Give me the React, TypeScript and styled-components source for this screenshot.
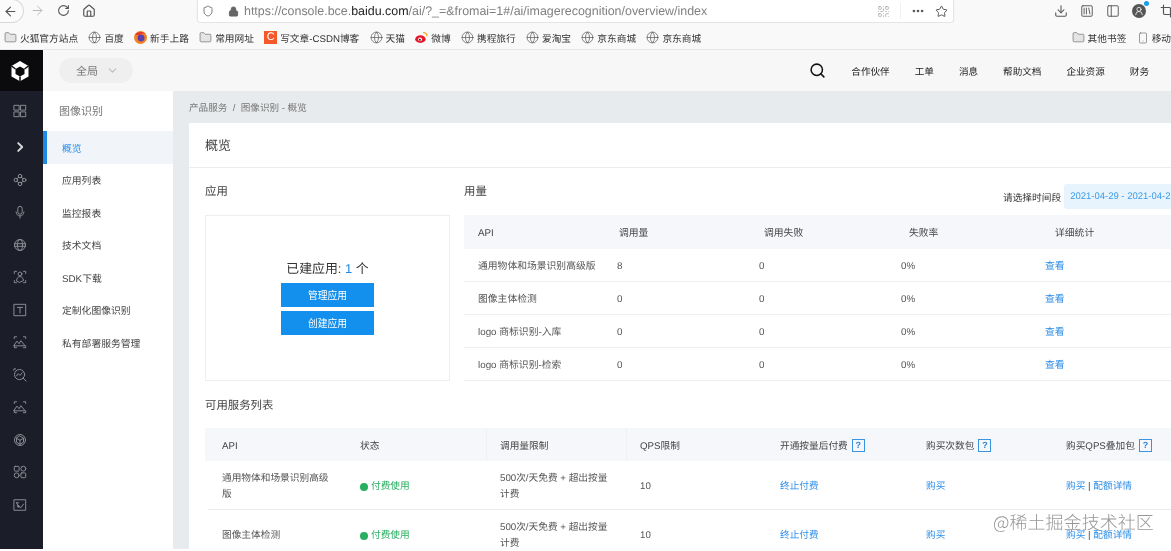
import React from "react";
import styled, { createGlobalStyle } from "styled-components";
import { ArrowLeft, ArrowRight, RotateCw, Home, Shield, Lock, Star, Download, Search, Globe, Folder, ChevronDown, MoreHorizontal, QrCode, PanelLeft, Crop, Smartphone, UserRound, SquareLibrary } from "lucide-react";

const Global = createGlobalStyle`
  html, body { margin: 0; padding: 0; background: #fff; overflow: hidden; }
  * { box-sizing: border-box; }
  body { font-family: "Liberation Sans", "Noto Sans CJK SC", sans-serif; text-rendering: geometricPrecision; }
`;

const Page = styled.div`
  width: 1171px; height: 551px; display: flex; flex-direction: column; overflow: hidden; position: relative; background: #fff; filter: blur(.3px);
`;
const Toolbar = styled.div`
  height: 23px; flex: none; background: #f9f9f9; display: flex; align-items: flex-start; color: #555;
`;
const BackCircle = styled.div`
  width: 24px; height: 24px; flex: none; margin-top: -1px; border-radius: 0 12px 12px 0; border: 1px solid #d8d8d8; border-left: 0; background: #fbfbfb;
  display: flex; align-items: center; justify-content: center; color: #555; padding-right: 2px;
`;
const NavIcons = styled.div`
  width: 174px; flex: none; display: flex; align-items: center; height: 21px; padding-left: 6px; gap: 12px; color: #555;
`;
const UrlBar = styled.div`
  width: 755px; height: 22px; flex: none; background: #fff; box-shadow: 0 0 2px rgba(0,0,0,.3); border-radius: 0 0 2px 2px;
  display: flex; align-items: center; padding: 0 5px 0 0; color: #666;
`;
const ShieldSlot = styled.span`
  width: 20px; display: flex; justify-content: center; margin-right: 10px; height: 16px; align-items: center;
`;
const Url = styled.span`
  font-size: 12.45px; color: #808080; margin-left: 5px; flex: 1; white-space: nowrap;
  b { font-weight: 400; color: #222; }
`;
const UrlActions = styled.div`
  display: flex; align-items: center; gap: 10px; color: #555;
`;
const UrlDivider = styled.span`
  width: 1px; height: 16px; background: #f0f0f0;
`;
const RightTools = styled.div`
  flex: 1; display: flex; justify-content: flex-end; align-items: center; height: 21px; gap: 12px; margin-right: -3px; color: #555;
`;
const Account = styled.span`
  position: relative; display: flex; width: 14px; height: 14px; border-radius: 50%; background: #555; color: #f3f3f3; align-items: center; justify-content: center; margin-right: 2px;
  &::after { content: ""; position: absolute; right: -3px; top: -3px; width: 5px; height: 5px; border-radius: 50%; background: #1c9cf0; }
`;
const Bookmarks = styled.div`
  height: 27px; flex: none; background: #f9f9f9; border-bottom: 1px solid #e6e6e6; display: flex; align-items: center; padding: 3px 0 0 4px; justify-content: space-between;
`;
const BookmarkGroup = styled.div`
  display: flex; align-items: center; gap: 10.3px;
`;
const Bookmark = styled.span`
  display: flex; align-items: center; gap: 3px; font-size: 9.7px; color: #333; white-space: nowrap;
  svg { flex: none; }
`;
const CIcon = styled.span`
  width: 13px; height: 13px; background: #f4592b; color: #fff; font-size: 11px; line-height: 13px; text-align: center; display: block;
`;
const Console = styled.div`
  height: 499px; flex: none; display: flex; overflow: hidden;
`;
const Rail = styled.div`
  width: 43px; flex: none; background: #1b1d28; display: flex; flex-direction: column; color: #8d9097;
`;
const LogoCell = styled.div`
  height: 41px; background: #0b0b0d; display: flex; align-items: center; justify-content: center; padding-right: 3px;
`;
const RailTop = styled.div`
  height: 40px; display: flex; align-items: center; justify-content: center; padding-right: 3px;
`;
const RailItem = styled.div`
  height: 32.5px; display: flex; align-items: center; justify-content: center; padding-right: 3px;
`;
const Column = styled.div`
  flex: 1; min-width: 0; display: flex; flex-direction: column;
`;
const TopBar = styled.div`
  height: 41px; flex: none; background: #f7f7f7; display: flex; align-items: center; padding: 0 22px 0 16px; justify-content: space-between;
`;
const Scope = styled.div`
  width: 74px; height: 25px; border-radius: 13px; background: #efefef; color: #777; font-size: 11px; display: flex; align-items: center; gap: 8px; padding-left: 17px;
  svg { color: #bbb; }
`;
const TopLinks = styled.div`
  display: flex; align-items: center; gap: 25px; color: #222; font-size: 9.6px;
`;
const Body = styled.div`
  flex: 1; min-height: 0; display: flex;
`;
const Side = styled.div`
  width: 130px; flex: none; background: #fff; display: flex; flex-direction: column;
`;
const SideTitle = styled.div`
  height: 40px; display: flex; align-items: center; padding-left: 16px; font-size: 11px; color: #777;
`;
const SideItem = styled.div<{ $active?: boolean }>`
  height: 32.5px; display: flex; align-items: center; font-size: 9.8px; line-height: 14px; white-space: nowrap;
  padding-left: ${(p) => (p.$active ? "15px" : "19px")};
  padding-top: 5px;
  color: ${(p) => (p.$active ? "#2f8fe8" : "#444")};
  background: ${(p) => (p.$active ? "#f1f5fa" : "#fff")};
  border-left: ${(p) => (p.$active ? "4px solid #1e8ae6" : "0")};
`;
const Main = styled.div`
  flex: 1; min-width: 0; background: #e8ebed; padding-left: 16px; overflow: hidden;
`;
const Crumb = styled.div`
  height: 32px; display: flex; align-items: center; font-size: 9.6px; color: #777; white-space: pre;
`;
const Card = styled.div`
  background: #fff; width: 1000px; height: 500px;
`;
const CardTitle = styled.div`
  height: 45px; border-bottom: 1px solid #ececec; display: flex; align-items: center; padding: 0 0 1px 16px; font-size: 13px; color: #444;
`;
const Content = styled.div`
  padding-left: 16px;
`;
const TopRow = styled.div`
  display: flex; gap: 14px; height: 213px;
`;
const AppPane = styled.div`
  width: 245px; flex: none;
`;
const SectionHead = styled.div`
  height: 47px; display: flex; align-items: center; justify-content: space-between; font-size: 11.4px; color: #444; padding-bottom: 1px;
`;
const AppBox = styled.div`
  height: 166px; border: 1px solid #eeeeee; display: flex; flex-direction: column; align-items: center; padding-top: 41px;
`;
const AppCount = styled.div`
  font-size: 12.9px; line-height: 23px; color: #333; margin-bottom: 3px;
  em { font-style: normal; color: #1e8ae6; }
`;
const PrimaryButton = styled.button`
  width: 93px; height: 24px; border: 0; background: #1390ee; color: #fff; font: 9.8px "Liberation Sans", "Noto Sans CJK SC", sans-serif; padding: 0; margin-bottom: 4px;
`;
const UsagePane = styled.div`
  width: 730px; flex: none;
`;
const UsageHeadBar = styled(SectionHead)`
  align-items: flex-start; padding-top: 16px;
  & > span:first-child { line-height: 14px; margin-top: 1px; }
`;
const DateArea = styled.div`
  display: flex; align-items: center; gap: 3px; font-size: 9.7px; color: #333; width: 191px; flex: none; white-space: nowrap;
`;
const DateBox = styled.div`
  width: 130px; height: 25px; background: #e8f4fd; border-radius: 3px; color: #3d9be9; font-size: 9.5px; display: flex; align-items: center; padding-left: 6px; white-space: nowrap; flex: none;
`;
const UsageHeader = styled.div`
  height: 34px; background: #f5f7fa; display: grid; grid-template-columns: 141px 145px 145px 146px 1fr; align-items: center; padding: 3px 0 0 14px; font-size: 9.8px; line-height: 14px; color: #444;
`;
const UsageRow = styled.div`
  height: 33px; border-bottom: 1px solid #eeeeee; display: grid; grid-template-columns: 139px 142px 142px 144px 1fr; align-items: center; padding: 4px 0 0 14px; font-size: 9.8px; line-height: 14px; color: #555; white-space: nowrap;
`;
const Link = styled.span`
  color: #2f8fe8;
`;
const ServiceHead = styled.div`
  height: 47px; display: flex; align-items: center; font-size: 11.4px; color: #444;
`;
const ServiceHeader = styled.div`
  height: 33px; background: #f5f7fa; display: grid; grid-template-columns: 138px 140px 140px 140px 146px 140px 1fr; align-items: center; padding-left: 17px; font-size: 9.7px; line-height: 14px; color: #444; white-space: nowrap;
`;
const HeaderCell = styled.div<{ $sep?: boolean }>`
  height: 33px; display: flex; align-items: center; gap: 4px; padding-top: 4px;
  ${(p) => (p.$sep ? "margin-left: -14px; padding-left: 13px; border-left: 1px solid #eef0f3;" : "")}
`;
const HelpBox = styled.span`
  width: 13px; height: 13px; border: 1px solid #3b94e0; color: #2f86d6; font-size: 9px; font-weight: 700; line-height: 11px; text-align: center; display: block; margin-top: -3px;
`;
const ServiceRow = styled.div`
  height: 49px; margin-left: 3px; padding-top: 3px; border-bottom: 1px solid #e9e9e9; display: grid; grid-template-columns: 138px 140px 140px 140px 146px 140px 1fr; align-items: center; padding-left: 14px; font-size: 9.7px; line-height: 16px; color: #555;
`;
const Wrap = styled.div`
  width: 112px;
`;
const Status = styled.span`
  color: #27ae60; display: flex; align-items: center; gap: 3px;
  &::before { content: ""; width: 8px; height: 8px; border-radius: 50%; background: #27ae60; }
`;
const Bar = styled.span`
  color: #444;
`;
const Watermark = styled.div`
  position: absolute; left: 993px; top: 510px; font-size: 18px; line-height: 25px; color: rgba(110,110,110,.72); white-space: nowrap; font-family: "Noto Sans CJK SC", sans-serif; font-weight: 300; letter-spacing: .05px;
`;

const Ic: React.FC<{ s?: number; w?: number; children: React.ReactNode }> = ({ s = 14, w = 1.1, children }) => (
  <svg width={s} height={s} viewBox="0 0 16 16" fill="none" stroke="currentColor" strokeWidth={w} strokeLinecap="round" strokeLinejoin="round">{children}</svg>
);

const railIcons: React.ReactNode[] = [
  <Ic w={2.2}><path d="M6 3.5 10.5 8 6 12.5" stroke="#d8d8dc" /></Ic>,
  <Ic><circle cx="8" cy="3.5" r="2" /><circle cx="8" cy="12.5" r="2" /><circle cx="3.2" cy="8" r="2" /><circle cx="12.8" cy="8" r="2" /><path d="M6.5 5 4.7 6.4M9.5 5l1.8 1.4M6.5 11 4.7 9.6M9.5 11l1.8-1.4" /></Ic>,
  <Ic><rect x="5.500" y="1.500" width="5" height="9" rx="2.500" /><path d="M3.500 8a4.500 4.500 0 0 0 9 0M8 12.500v2.500" /></Ic>,
  <Ic><circle cx="8" cy="8" r="6.300" /><ellipse cx="8" cy="8" rx="3" ry="6.300" /><path d="M1.700 6.500h12.600M1.700 9.500h12.600" /></Ic>,
  <Ic><path d="M1.500 4V1.500H4M12 1.500h2.500V4M1.500 12v2.500H4M12 14.500h2.500V12" /><circle cx="8" cy="4.500" r="2.200" /><path d="M4 12c.5-3 2-4.500 4-4.500S11.500 9 12 12l-4 2z" /></Ic>,
  <Ic><rect x="1.500" y="1.500" width="13" height="13" /><path d="M5 5h6M8 5v6.500" /></Ic>,
  <Ic><path d="M1.500 4V2H4M12 2h2.500v2M1.500 12.500V14.500H4M12 14.500h2.500v-2" /><path d="M1 12l3.500-5 2.500 3 2-3.500 4.500 5.500z" /></Ic>,
  <Ic><circle cx="7.500" cy="7.500" r="5.800" /><path d="M4 9l2-2.500L8 8.500l2.500-3M11.500 11.500 15 15M1 2.500V1h2" /></Ic>,
  <Ic><path d="M1.500 4V2H4M12 2h2.500v2M1.500 12.500V14.500H4M12 14.500h2.500v-2" /><path d="M1 12l3.500-5 2.500 3 2-3.500 4.500 5.500z" /></Ic>,
  <Ic><circle cx="8" cy="8" r="6.300" /><path d="M8 3.500 12 6v4.500L8 13l-4-2.500V6zM4 6l4 2.300L12 6M8 8.300V13" /></Ic>,
  <Ic><rect x="1.500" y="1.500" width="5.500" height="5.500" rx="1" /><circle cx="11.800" cy="4.200" r="2.800" /><circle cx="4.200" cy="11.800" r="2.800" /><rect x="9" y="9" width="5.500" height="5.500" rx="1" /></Ic>,
  <Ic><rect x="1.500" y="2" width="13" height="12" /><path d="M4 5.500h2.500M4 5.500 6 9.500l3 1.500 3-4" /><circle cx="6" cy="9.500" r="1" /></Ic>,
];

const Logo = () => (
  <svg width="20" height="22" viewBox="0 0 20 22" fill="none">
    <path d="M10 1 18.500 6v10.500L10 21.200 1.500 16.500V6z" fill="#fff" />
    <path d="M10 6.500 14.500 9v5L10 16.500 5.500 14V9z" fill="#0b0b0d" />
    <path d="M1.500 6 5.500 9M18.500 6l-4 3M10 21.200v-4.700" stroke="#0b0b0d" strokeWidth="1.500" />
  </svg>
);

const Firefox = () => (
  <svg width="13" height="13" viewBox="0 0 12 12"><circle cx="6" cy="6" r="6" fill="#f58220" /><circle cx="6.500" cy="6.500" r="3.200" fill="#5a3fb0" /><path d="M1 3.500C3 .5 8 0 10.500 2.500 8 2 6 2.500 5 4z" fill="#e5352c" /></svg>
);
const Weibo = () => (
  <svg width="13" height="13" viewBox="0 0 12 12"><ellipse cx="5" cy="7.500" rx="4.800" ry="3.500" fill="#e6162d" /><circle cx="4.700" cy="7.700" r="1.800" fill="#fff" /><circle cx="4.500" cy="8" r=".9" fill="#222" /><path d="M7.500 1.500a3 3 0 0 1 3.500 3.500" stroke="#f5a623" strokeWidth="1.200" fill="none" /></svg>
);
const globe = <Globe size={13} strokeWidth={1.3} color="#555" />;
const folder = <Folder size={13} strokeWidth={1.2} color="#666" fill="#e4e4e4" />;

const usage = [
  ["通用物体和场景识别高级版", "8"],
  ["图像主体检测", "0"],
  ["logo 商标识别-入库", "0"],
  ["logo 商标识别-检索", "0"],
];
const services = ["通用物体和场景识别高级版", "图像主体检测"];

export default function App() {
  return (
    <Page>
      <Global />
      <Toolbar>
        <BackCircle><ArrowLeft size={15} strokeWidth={1.8} /></BackCircle>
        <NavIcons>
          <ArrowRight size={15} strokeWidth={1.5} color="#b5b5b5" />
          <RotateCw size={13} strokeWidth={2} />
          <Home size={14} strokeWidth={2} />
        </NavIcons>
        <UrlBar>
          <ShieldSlot><Shield size={12} strokeWidth={1.7} /></ShieldSlot>
          <Lock size={11} strokeWidth={2} fill="#666" />
          <Url>https://console.bce.<b>baidu.com</b>/ai/?_=&amp;fromai=1#/ai/imagerecognition/overview/index</Url>
          <UrlActions>
            <QrCode size={13} strokeWidth={1.5} color="#aaa" />
            <UrlDivider />
            <MoreHorizontal size={14} strokeWidth={2.5} />
            <Star size={13} strokeWidth={1.8} />
          </UrlActions>
        </UrlBar>
        <RightTools>
          <Download size={14} strokeWidth={1.8} />
          <SquareLibrary size={14} strokeWidth={1.6} />
          <PanelLeft size={14} strokeWidth={1.6} />
          <Account><UserRound size={10} strokeWidth={2} /></Account>
          <Crop size={14} strokeWidth={2} />
        </RightTools>
      </Toolbar>
      <Bookmarks>
        <BookmarkGroup>
          <Bookmark>{folder}火狐官方站点</Bookmark>
          <Bookmark>{globe}百度</Bookmark>
          <Bookmark><Firefox />新手上路</Bookmark>
          <Bookmark>{folder}常用网址</Bookmark>
          <Bookmark><CIcon>C</CIcon>写文章-CSDN博客</Bookmark>
          <Bookmark>{globe}天猫</Bookmark>
          <Bookmark><Weibo />微博</Bookmark>
          <Bookmark>{globe}携程旅行</Bookmark>
          <Bookmark>{globe}爱淘宝</Bookmark>
          <Bookmark>{globe}京东商城</Bookmark>
          <Bookmark>{globe}京东商城</Bookmark>
        </BookmarkGroup>
        <BookmarkGroup>
          <Bookmark>{folder}其他书签</Bookmark>
          <Bookmark><Smartphone size={12} strokeWidth={1.3} color="#666" />移动</Bookmark>
        </BookmarkGroup>
      </Bookmarks>
      <Console>
        <Rail>
          <LogoCell><Logo /></LogoCell>
          <RailTop>
            <Ic><rect x="1.500" y="1.500" width="5.500" height="5.500" /><rect x="9" y="1.500" width="5.500" height="5.500" /><rect x="1.500" y="9" width="5.500" height="5.500" /><rect x="9" y="9" width="5.500" height="5.500" /></Ic>
          </RailTop>
          {railIcons.map((icon, i) => <RailItem key={i}>{icon}</RailItem>)}
        </Rail>
        <Column>
          <TopBar>
            <Scope>全局<ChevronDown size={13} /></Scope>
            <TopLinks>
              <Search size={17} strokeWidth={2.2} color="#111" />
              <span>合作伙伴</span><span>工单</span><span>消息</span><span>帮助文档</span><span>企业资源</span><span>财务</span>
            </TopLinks>
          </TopBar>
          <Body>
            <Side>
              <SideTitle>图像识别</SideTitle>
              <SideItem $active>概览</SideItem>
              <SideItem>应用列表</SideItem>
              <SideItem>监控报表</SideItem>
              <SideItem>技术文档</SideItem>
              <SideItem>SDK下载</SideItem>
              <SideItem>定制化图像识别</SideItem>
              <SideItem>私有部署服务管理</SideItem>
            </Side>
            <Main>
              <Crumb>产品服务  /  图像识别 - 概览</Crumb>
              <Card>
                <CardTitle>概览</CardTitle>
                <Content>
                  <TopRow>
                    <AppPane>
                      <SectionHead>应用</SectionHead>
                      <AppBox>
                        <AppCount>已建应用: <em>1</em> 个</AppCount>
                        <PrimaryButton>管理应用</PrimaryButton>
                        <PrimaryButton>创建应用</PrimaryButton>
                      </AppBox>
                    </AppPane>
                    <UsagePane>
                      <UsageHeadBar>
                        <span>用量</span>
                        <DateArea>请选择时间段<DateBox>2021-04-29 - 2021-04-29</DateBox></DateArea>
                      </UsageHeadBar>
                      <UsageHeader><span>API</span><span>调用量</span><span>调用失败</span><span>失败率</span><span>详细统计</span></UsageHeader>
                      {usage.map(([name, count]) => (
                        <UsageRow key={name}><span>{name}</span><span>{count}</span><span>0</span><span>0%</span><Link>查看</Link></UsageRow>
                      ))}
                    </UsagePane>
                  </TopRow>
                  <ServiceHead>可用服务列表</ServiceHead>
                  <ServiceHeader>
                    <HeaderCell>API</HeaderCell>
                    <HeaderCell>状态</HeaderCell>
                    <HeaderCell $sep>调用量限制</HeaderCell>
                    <HeaderCell $sep>QPS限制</HeaderCell>
                    <HeaderCell>开通按量后付费<HelpBox>?</HelpBox></HeaderCell>
                    <HeaderCell>购买次数包<HelpBox>?</HelpBox></HeaderCell>
                    <HeaderCell>购买QPS叠加包<HelpBox>?</HelpBox></HeaderCell>
                  </ServiceHeader>
                  {services.map((name) => (
                    <ServiceRow key={name}>
                      <Wrap>{name}</Wrap>
                      <Status>付费使用</Status>
                      <Wrap>500次/天免费 + 超出按量计费</Wrap>
                      <span>10</span>
                      <Link>终止付费</Link>
                      <Link>购买</Link>
                      <span><Link>购买</Link> <Bar>|</Bar> <Link>配额详情</Link></span>
                    </ServiceRow>
                  ))}
                </Content>
              </Card>
            </Main>
          </Body>
        </Column>
      </Console>
      <Watermark>@稀土掘金技术社区</Watermark>
    </Page>
  );
}
